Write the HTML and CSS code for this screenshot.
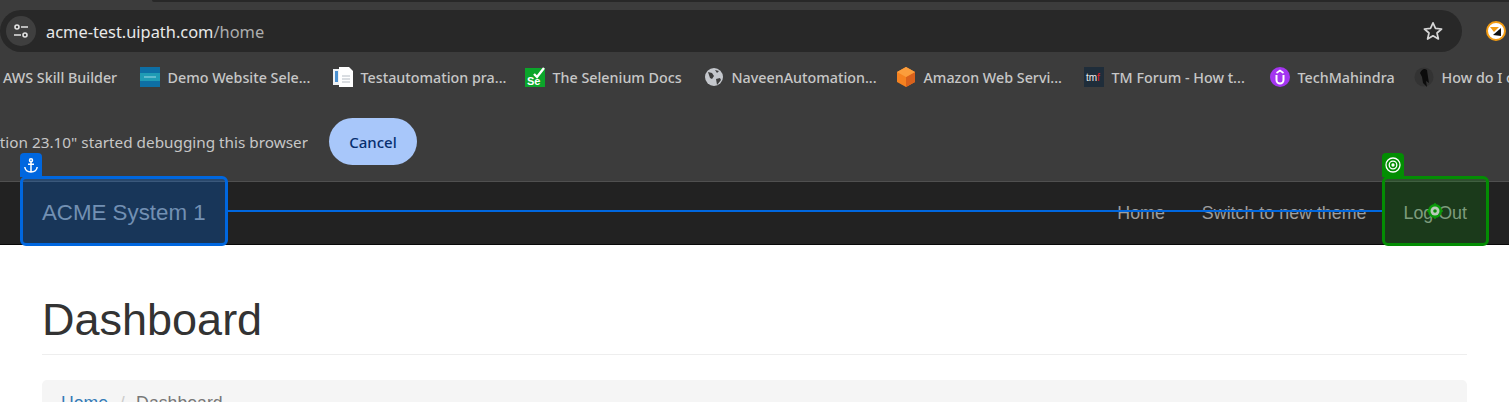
FILE: index.html
```html
<!DOCTYPE html>
<html lang="en">
<head>
    <meta charset="UTF-8">
    <meta name="viewport" content="width=device-width, initial-scale=1.0">
    <title>ACME System 1</title>
    <link rel="stylesheet" href="styles.css">
</head>
<body>
    <div id="browser">
        <div id="tab-strip"><div id="tab-edge"></div></div>
        <div id="toolbar">
            <div id="address-bar">
                <span id="site-info">
                    <svg width="18" height="18" viewBox="0 0 18 18" fill="none" stroke="#e3e3e3" stroke-width="1.6"><circle cx="5" cy="5" r="2"/><path d="M9 5h7M2 13h7"/><circle cx="13" cy="13" r="2"/></svg>
                </span>
                <span id="url">acme-test.uipath.com<span id="url-path">/home</span></span>
                <svg id="star" width="20" height="20" viewBox="0 0 20 20" fill="none" stroke="#d6d6d6" stroke-width="1.7" stroke-linejoin="round"><path d="M10 1.8l2.5 5.6 6.1.6-4.6 4 1.4 6-5.4-3.2-5.4 3.2 1.4-6-4.6-4 6.1-.6z"/></svg>
            </div>
            <svg id="extension" width="20" height="20" viewBox="0 0 20 20"><circle cx="10" cy="10" r="9" fill="#fff" stroke="#f39c12" stroke-width="2"/><path d="M4 6h9l-5 5z" fill="#f39c12"/><path d="M7 14l8-7v8z" fill="#111"/></svg>
        </div>

        <div id="bookmarks">
            <div class="bookmark first"><span>AWS Skill Builder</span></div>
            <div class="bookmark">
                <svg class="fav" viewBox="0 0 20 20"><rect width="20" height="20" fill="#0e6fa5"/><rect y="6" width="20" height="8" fill="#1f9bb5"/><path d="M4 10h12" stroke="#9fd8e6"/></svg>
                <span>Demo Website Sele...</span>
            </div>
            <div class="bookmark">
                <svg class="fav" viewBox="0 0 20 20"><path d="M0 2h6v16H0z" fill="#eef1f4"/><path d="M2 4h3v11H2z" fill="#4a90d0"/><path d="M6 0h10l4 4v16H6z" fill="#fff"/><path d="M9 9h8M9 12h8M9 15h8" stroke="#b5bcc4"/></svg>
                <span>Testautomation pra...</span>
            </div>
            <div class="bookmark">
                <svg class="fav" viewBox="0 0 20 20"><rect y="1" width="20" height="19" fill="#0ba52a"/><path d="M9 7l3 3 7-9" fill="none" stroke="#fff" stroke-width="2.4"/><text x="2" y="18" class="fav-text">Se</text></svg>
                <span>The Selenium Docs</span>
            </div>
            <div class="bookmark">
                <svg class="fav" viewBox="0 0 20 20"><circle cx="10" cy="10" r="9" fill="#c4c7cc"/><path d="M4 5l4 1 2 3-2 3-2-1zM12 12l4-1 1 2-4 5zM11 3l4 1-2 2z" fill="#3c3c3c"/></svg>
                <span>NaveenAutomation...</span>
            </div>
            <div class="bookmark">
                <svg class="fav" viewBox="0 0 20 20"><path d="M10 0l9 5v10l-9 5-9-5V5z" fill="#f58220"/><path d="M10 10l9-5v10l-9 5z" fill="#d9611c"/><path d="M10 0l9 5-9 5-9-5z" fill="#fb9d3c"/></svg>
                <span>Amazon Web Servi...</span>
            </div>
            <div class="bookmark">
                <svg class="fav" viewBox="0 0 20 20"><rect width="20" height="20" fill="#1f2d3a"/><text x="2" y="14" class="fav-tmf">tm<tspan fill="#e3202a">f</tspan></text></svg>
                <span>TM Forum - How t...</span>
            </div>
            <div class="bookmark">
                <svg class="fav" viewBox="0 0 20 20"><circle cx="10" cy="10" r="10" fill="#a435f0"/><path d="M6.5 8v5a3.5 3.5 0 0 0 7 0V8" fill="none" stroke="#fff" stroke-width="2"/><path d="M6.5 6L10 3.5 13.500 6" fill="none" stroke="#fff" stroke-width="1.600"/></svg>
                <span>TechMahindra</span>
            </div>
            <div class="bookmark last">
                <svg class="fav" viewBox="0 0 20 20"><circle cx="10" cy="10" r="9.500" fill="#333"/><path d="M6 6q3-6 7-3l1 7 1 6-3-2 1 6-4-4-1-6z" fill="#0c0c0c"/></svg>
                <span>How do I c</span>
            </div>
        </div>

        <div id="debug-bar">
            <div id="debug-text"><span>tion 23.10" started debugging this browser</span></div>
            <button id="debug-cancel">Cancel</button>
        </div>
    </div>

    <nav id="navbar">
        <a class="brand">ACME System 1</a>
        <div id="nav-links">
            <a>Home</a>
            <a>Switch to new theme</a>
            <a>Log Out</a>
        </div>
    </nav>

    <div id="page">
        <div id="page-header"><h1>Dashboard</h1></div>
        <div id="breadcrumb">
            <a>Home</a>
            <span class="sep">/</span>
            <span class="current">Dashboard</span>
        </div>
    </div>

    <!-- selector overlay, sits over the page -->
    <div id="anchor-line"></div>
    <div class="sel-box anchor-box"></div>
    <div class="sel-tag anchor-tag">
        <svg width="16" height="17" viewBox="0 0 16 16" fill="none" stroke="#fff" stroke-width="1.5"><circle cx="8" cy="2.800" r="1.500"/><path d="M8 4.300V14.500M5 6.800h6M1.800 9.500c.4 3 3 5 6.200 5s5.800-2 6.200-5"/></svg>
    </div>
    <div class="sel-box target-box"></div>
    <div class="sel-tag target-tag">
        <svg width="16" height="16" viewBox="0 0 16 16" fill="none" stroke="#fff" stroke-width="1.300"><circle cx="8" cy="8" r="7"/><circle cx="8" cy="8" r="3.800"/><circle cx="8" cy="8" r="1" fill="#fff"/></svg>
    </div>
    <svg id="target-mark" width="16" height="16" viewBox="0 0 16 16"><path d="M8 0v16M0 8h16" stroke="#0a9a0a" stroke-width="1.500"/><circle cx="8" cy="8" r="7" fill="#0a9a0a"/><circle cx="8" cy="8" r="4.500" fill="#b9c9b9"/><circle cx="8" cy="8" r="1.800" fill="#0a8a0a"/></svg>
</body>
</html>
```

FILE: styles.css
```css
html, body {
    height: 402px;
    overflow: hidden;
}

body {
    margin: 0;
    font-family: "Liberation Sans", Arial, sans-serif;
    background-color: #fff;
    color: #333;
}

#browser {
    background-color: #3c3c3c;
    border-bottom: 1px solid #505050;
    font-family: "Noto Sans", "Open Sans", sans-serif;
}

#tab-strip {
    height: 2px;
}

#tab-edge {
    height: 2px;
    margin-left: 152px;
    background-color: #282828;
    border-bottom-left-radius: 3px;
}

#toolbar {
    display: flex;
    align-items: center;
    margin-top: 8px;
    height: 42px;
}

#address-bar {
    display: flex;
    align-items: center;
    width: 1462px;
    height: 42px;
    box-sizing: border-box;
    padding: 0 19px 0 6px;
    background-color: #282828;
    border-radius: 21px;
}

#site-info {
    display: flex;
    align-items: center;
    justify-content: center;
    width: 30px;
    height: 30px;
    border-radius: 50%;
    background-color: #3f3f3f;
}

#url {
    margin-left: 10px;
    font-size: 16.400px;
    color: #e8e8e8;
    flex: 1;
}

#url-path {
    color: #aeaeae;
}

#extension {
    margin-left: 24px;
    flex-shrink: 0;
}

#bookmarks {
    display: grid;
    grid-template-columns: 137px 193px 192px 179px 192px 188px 186px 144px minmax(0, 1fr);
    align-items: center;
    height: 30px;
    margin-top: 10px;
    padding-left: 3px;
    white-space: nowrap;
    font-size: 14.300px;
    font-weight: 500;
    color: #c7c7c7;
}

.bookmark {
    display: flex;
    align-items: center;
    gap: 7.500px;
    min-width: 0;
}

.bookmark.last {
    overflow: hidden;
}

.fav {
    width: 20px;
    height: 20px;
    flex-shrink: 0;
}

.fav-text {
    font-family: "Liberation Sans", sans-serif;
    font-size: 11px;
    font-weight: 700;
    fill: #fff;
}

.fav-tmf {
    font-family: "Liberation Sans", sans-serif;
    font-size: 10px;
    fill: #eee;
}

#debug-bar {
    display: flex;
    align-items: center;
    gap: 21px;
    margin-top: 26px;
    padding-bottom: 16px;
}

#debug-text {
    display: flex;
    justify-content: flex-end;
    width: 308px;
    overflow: hidden;
    white-space: nowrap;
    font-size: 15.300px;
    color: #c7c7c7;
}

#debug-cancel {
    width: 88px;
    height: 47px;
    border: 0;
    border-radius: 24px;
    background-color: #a8c7fa;
    color: #062e6f;
    font-family: inherit;
    font-size: 15px;
    font-weight: 500;
}

#navbar {
    display: flex;
    align-items: center;
    justify-content: space-between;
    height: 62px;
    padding: 0 42px;
    background-color: #222;
    border-bottom: 1px solid #080808;
    color: #9d9d9d;
}

.brand {
    font-size: 22.300px;
}

#nav-links {
    display: flex;
    gap: 37px;
    font-size: 17.850px;
}

#page {
    padding: 50px 42px 0;
}

#page-header {
    padding-bottom: 9px;
    border-bottom: 1px solid #eee;
    margin-bottom: 25px;
}

h1 {
    margin: 0;
    font-size: 45px;
    font-weight: 500;
    line-height: 50px;
}

#breadcrumb {
    display: flex;
    gap: 11.500px;
    padding: 11px 19px;
    background-color: #f5f5f5;
    border-radius: 5px;
    font-size: 17.700px;
    line-height: 25px;
}

#breadcrumb a {
    color: #337ab7;
}

.sep {
    color: #ccc;
}

.current {
    color: #777;
}

/* overlay */
#anchor-line {
    position: absolute;
    left: 228px;
    top: 210px;
    width: 1154px;
    height: 2px;
    background-color: #0067df;
}

.sel-box {
    position: absolute;
    top: 176px;
    height: 70px;
    box-sizing: border-box;
    border: 3px solid;
    border-radius: 6px;
}

.anchor-box {
    left: 20px;
    width: 208px;
    border-color: #0067df;
    background-color: rgba(0, 110, 240, 0.27);
}

.target-box {
    left: 1382px;
    width: 107px;
    border-color: #038d03;
    background-color: rgba(0, 153, 0, 0.2);
}

.sel-tag {
    position: absolute;
    top: 153px;
    display: flex;
    align-items: center;
    justify-content: center;
    width: 22px;
    height: 24px;
    border-radius: 4px 4px 0 0;
}

.anchor-tag {
    left: 20px;
    background-color: #0067df;
}

.target-tag {
    left: 1382px;
    background-color: #038d03;
}

#target-mark {
    position: absolute;
    left: 1427px;
    top: 203px;
}
```
